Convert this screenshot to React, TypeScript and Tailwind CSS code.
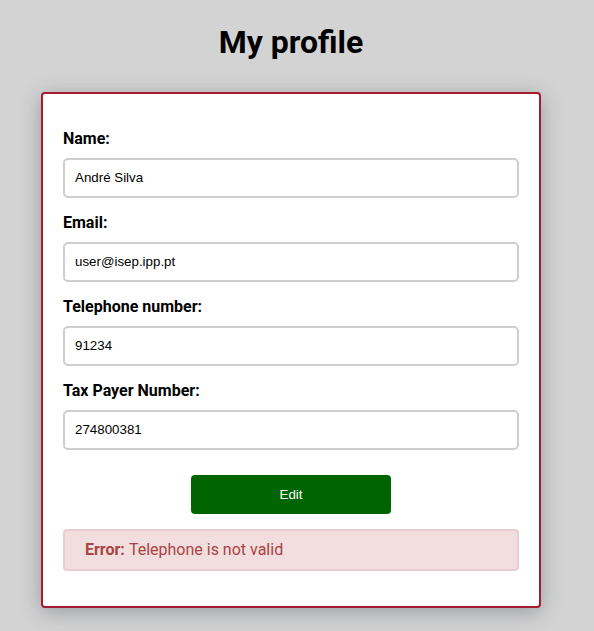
import React from "react";

const fields = [
  { label: "Name:", value: "André Silva" },
  { label: "Email:", value: "user@isep.ipp.pt" },
  { label: "Telephone number:", value: "91234" },
  { label: "Tax Payer Number:", value: "274800381" },
];

export default function App() {
  return (
    <div className="min-h-[631px] w-full bg-[#d3d3d3] font-['Roboto',sans-serif] text-black">
      <div className="w-[582px]">
        <h1 className="pt-[23px] text-center text-[32px] font-bold leading-[38px]">My profile</h1>
        <div className="mx-auto mt-[31px] w-[500px] rounded-[4px] border-2 border-[#a51c30] bg-white px-[20px] pt-[35px] pb-[35px] shadow-[0_4px_20px_rgba(50,55,70,0.35)]">
          {fields.map((f, i) => (
            <div key={i} className={i > 0 ? "mt-[15px]" : ""}>
              <div className="text-[16px] font-bold leading-[19px]">{f.label}</div>
              <div className="mt-[10px] flex h-[40px] items-center rounded-[5px] border-2 border-[#cfcfcf] px-[10px] font-['Liberation_Sans',Arial,sans-serif] text-[13.33px]">
                {f.value}
              </div>
            </div>
          ))}
          <div className="mt-[25px] flex justify-center">
            <button className="h-[39px] w-[200px] rounded-[4px] bg-[#006400] font-['Liberation_Sans',Arial,sans-serif] text-[13.33px] text-white">
              Edit
            </button>
          </div>
          <div className="mt-[15px] flex h-[42px] items-center rounded-[4px] border-2 border-[#ebccd1] bg-[#f2dede] px-[20px] text-[16px] text-[#a94442]">
            <span className="font-bold">Error:</span>
            <span className="ml-[4px]">Telephone is not valid</span>
          </div>
        </div>
      </div>
    </div>
  );
}
